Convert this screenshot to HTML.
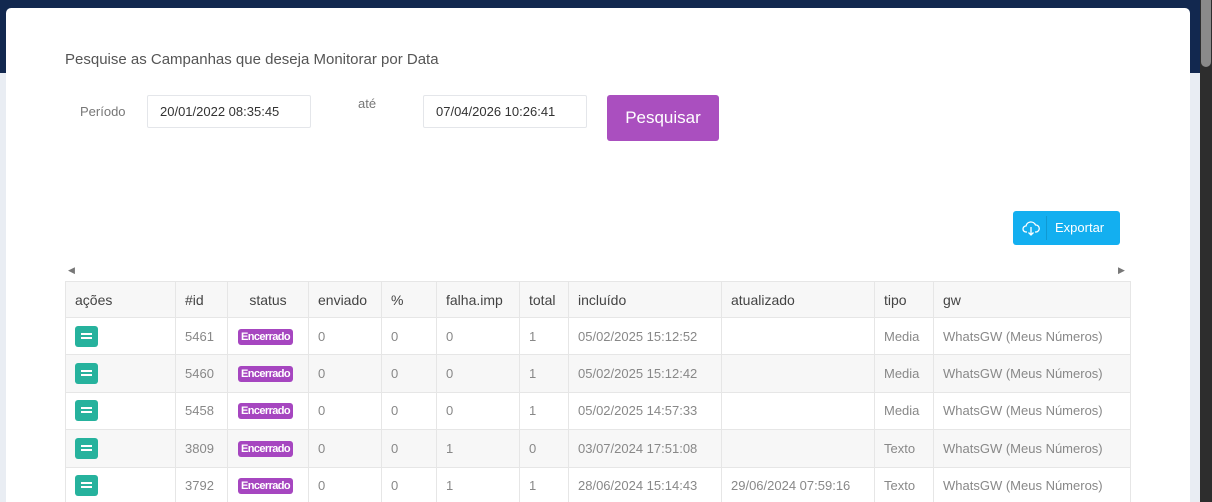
<!DOCTYPE html>
<html><head><meta charset="utf-8"><style>
*{box-sizing:border-box;margin:0;padding:0}
html,body{width:1212px;height:502px;overflow:hidden}
body{position:relative;background:#e9edf3;font-family:"Liberation Sans",sans-serif;}
.top{position:absolute;left:0;top:0;width:1200px;height:73px;background:#12284f}
.sb{position:absolute;right:0;top:0;width:12px;height:502px;background:#2d2d2d}
.thumb{position:absolute;right:1px;top:0;width:10px;height:67px;background:#8a8a8a;border-radius:0 0 5px 5px}
.modal{position:absolute;left:6px;top:8px;width:1184px;height:494px;background:#fff;border-radius:5px 5px 0 0}
.t{position:absolute;white-space:nowrap}
.inp{position:absolute;height:33px;border:1px solid #e4e6ea;border-radius:2px;font-size:13px;color:#333;padding:8px 12px}
.btn{position:absolute;left:607px;top:95px;width:112px;height:46px;background:#aa4fbf;border-radius:3px;color:#fff;font-size:17px;text-align:center;line-height:45px}
.exp{position:absolute;left:1013px;top:211px;width:107px;height:34px;background:#13aff0;border-radius:3px;color:#fff;font-size:13px}
table{position:absolute;left:65px;top:281px;border-collapse:collapse;font-size:13px;color:#888;}
td,th{border:1px solid #e6e6e6;padding:0 9px;height:37.4px;text-align:left;white-space:nowrap}
th{font-weight:normal;color:#444;font-size:14px;background:#f7f7f7;height:36px}
tr:nth-child(odd) td{background:#f7f7f7}
.ab{display:inline-block;width:23px;height:21px;background:#26b29d;border-radius:3px;position:relative;vertical-align:middle}
.ab:before{content:"";position:absolute;left:6px;top:7px;width:11px;height:2px;background:#fff;box-shadow:0 4px 0 #fff}
.bd{display:inline-block;background:#a646c0;color:#fff;font-size:11px;font-weight:bold;padding:2px 3px;border-radius:3px;letter-spacing:-0.6px}
</style></head><body>
<div class="top"></div>
<div class="sb"><div class="thumb"></div></div>
<div class="modal"></div>
<div class="t" style="left:65px;top:51px;font-size:15px;color:#555">Pesquise as Campanhas que deseja Monitorar por Data</div>
<div class="t" style="left:80px;top:104px;font-size:13px;color:#777">Período</div>
<div class="inp" style="left:147px;top:95px;width:164px">20/01/2022 08:35:45</div>
<div class="t" style="left:358px;top:96px;font-size:13px;color:#777">até</div>
<div class="inp" style="left:423px;top:95px;width:164px">07/04/2026 10:26:41</div>
<div class="btn">Pesquisar</div>
<div class="exp">
<svg style="position:absolute;left:9px;top:9px" width="18" height="16" viewBox="0 0 18 16" fill="none" stroke="#fff" stroke-width="1.3"><path d="M5 12H4a3 3 0 0 1 0-6 5 5 0 0 1 9.5-1A3.5 3.5 0 0 1 14 12h-1"/><path d="M9 7v8M6.5 12.5 9 15l2.5-2.5"/></svg>
<div style="position:absolute;left:33px;top:5px;width:1px;height:24px;background:rgba(0,0,0,0.12)"></div>
<div class="t" style="left:42px;top:9px">Exportar</div></div>
<div class="t" style="left:68px;top:265px;font-size:9px;color:#777">◀</div>
<div class="t" style="left:1118px;top:265px;font-size:9px;color:#777">▶</div>
<table>
<tr><th style="width:110px">ações</th><th style="width:52px">#id</th><th style="width:81px;text-align:center">status</th><th style="width:73px">enviado</th><th style="width:55px">%</th><th style="width:83px">falha.imp</th><th style="width:49px">total</th><th style="width:153px">incluído</th><th style="width:153px">atualizado</th><th style="width:59px">tipo</th><th style="width:197px">gw</th></tr>
<tr><td><span class="ab"></span></td><td>5461</td><td style="padding:0 10px"><span class="bd">Encerrado</span></td><td>0</td><td>0</td><td>0</td><td>1</td><td>05/02/2025 15:12:52</td><td></td><td>Media</td><td>WhatsGW (Meus Números)</td></tr>
<tr><td><span class="ab"></span></td><td>5460</td><td style="padding:0 10px"><span class="bd">Encerrado</span></td><td>0</td><td>0</td><td>0</td><td>1</td><td>05/02/2025 15:12:42</td><td></td><td>Media</td><td>WhatsGW (Meus Números)</td></tr>
<tr><td><span class="ab"></span></td><td>5458</td><td style="padding:0 10px"><span class="bd">Encerrado</span></td><td>0</td><td>0</td><td>0</td><td>1</td><td>05/02/2025 14:57:33</td><td></td><td>Media</td><td>WhatsGW (Meus Números)</td></tr>
<tr><td><span class="ab"></span></td><td>3809</td><td style="padding:0 10px"><span class="bd">Encerrado</span></td><td>0</td><td>0</td><td>1</td><td>0</td><td>03/07/2024 17:51:08</td><td></td><td>Texto</td><td>WhatsGW (Meus Números)</td></tr>
<tr><td><span class="ab"></span></td><td>3792</td><td style="padding:0 10px"><span class="bd">Encerrado</span></td><td>0</td><td>0</td><td>1</td><td>1</td><td>28/06/2024 15:14:43</td><td>29/06/2024 07:59:16</td><td>Texto</td><td>WhatsGW (Meus Números)</td></tr>
</table>
</body></html>
